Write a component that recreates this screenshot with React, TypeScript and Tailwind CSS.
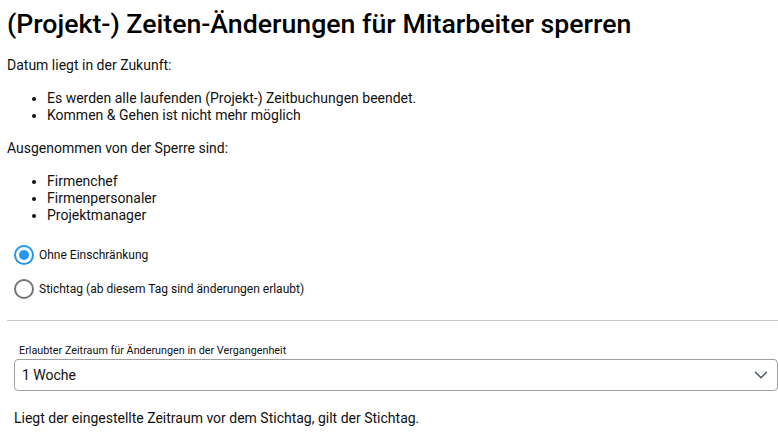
import React, { useState } from 'react';
import { ChevronDown } from 'lucide-react';

const Bullets: React.FC<{ items: string[] }> = ({ items }) => (
  <ul className="list-disc pl-[40px] text-[14px] leading-[17px]">
    {items.map((item) => (
      <li key={item}>{item}</li>
    ))}
  </ul>
);

const Radio: React.FC<{ checked: boolean; label: string; onSelect: () => void }> = ({ checked, label, onSelect }) => (
  <label className="flex h-[20px] cursor-pointer items-center" onClick={onSelect}>
    <span
      className={`flex h-[20px] w-[20px] items-center justify-center rounded-full border-2 ${
        checked ? 'border-[#2196f3]' : 'border-[#757575]'
      }`}
    >
      {checked && <span className="h-[10px] w-[10px] rounded-full bg-[#2196f3]" />}
    </span>
    <span className="ml-[5px] text-[12px] leading-[15px]">{label}</span>
  </label>
);

export default function App() {
  const [mode, setMode] = useState<'none' | 'stichtag'>('none');

  return (
    <div className="min-h-screen bg-white px-[7px] pt-[8px] text-[#111] [font-family:Roboto,'Noto_Sans',sans-serif]">
      <h1 className="text-[26.7px] font-medium leading-[32px] text-black">
        (Projekt-) Zeiten-Änderungen für Mitarbeiter sperren
      </h1>

      <p className="mt-[17px] text-[14px] leading-[17px]">Datum liegt in der Zukunft:</p>
      <div className="mt-[16px]">
        <Bullets
          items={[
            'Es werden alle laufenden (Projekt-) Zeitbuchungen beendet.',
            'Kommen & Gehen ist nicht mehr möglich',
          ]}
        />
      </div>

      <p className="mt-[16px] text-[14px] leading-[17px]">Ausgenommen von der Sperre sind:</p>
      <div className="mt-[16px]">
        <Bullets items={['Firmenchef', 'Firmenpersonaler', 'Projektmanager']} />
      </div>

      <div className="mt-[21px] flex flex-col gap-[14px] pl-[7px]">
        <Radio checked={mode === 'none'} label="Ohne Einschränkung" onSelect={() => setMode('none')} />
        <Radio
          checked={mode === 'stichtag'}
          label="Stichtag (ab diesem Tag sind änderungen erlaubt)"
          onSelect={() => setMode('stichtag')}
        />
      </div>

      <div className="mt-[21px] -mr-[7px] h-px bg-[#c8c8c8]" />

      <div className="mt-[23px] pl-[7px] -mr-[7px]">
        <div className="pl-[5px] text-[10.8px] leading-[14px]">Erlaubter Zeitraum für Änderungen in der Vergangenheit</div>
        <div className="mt-[1px] flex h-[32px] items-center justify-between rounded-[4px] border border-[#9e9e9e] pl-[7px] pr-[5px]">
          <span className="text-[14px]">1 Woche</span>
          <ChevronDown size={22} strokeWidth={1.6} className="text-[#455a64]" />
        </div>
        <p className="mt-[19px] text-[14px] leading-[17px]">
          Liegt der eingestellte Zeitraum vor dem Stichtag, gilt der Stichtag.
        </p>
      </div>
    </div>
  );
}
